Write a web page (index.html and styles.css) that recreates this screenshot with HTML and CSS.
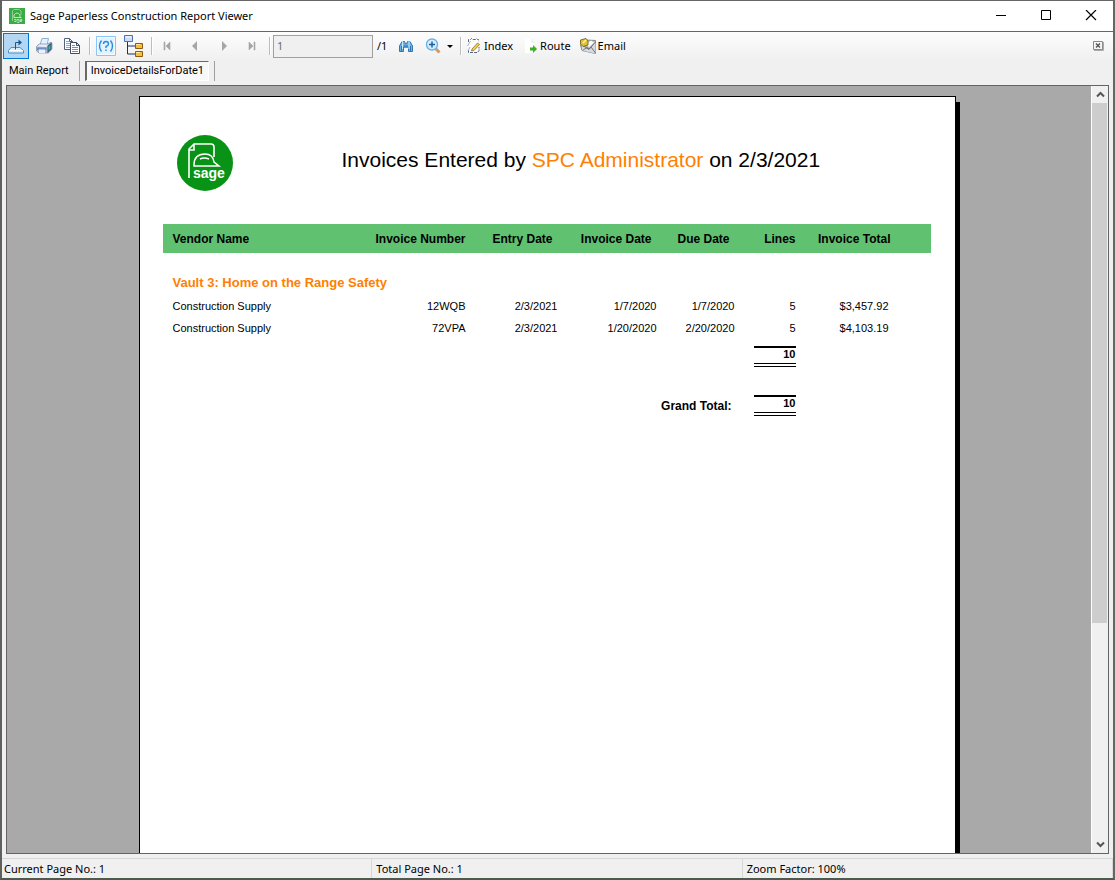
FILE: index.html
```html
<!DOCTYPE html>
<html lang="en">
<head>
<meta charset="utf-8">
<title>Sage Paperless Construction Report Viewer</title>
<link rel="stylesheet" href="styles.css">
</head>
<body>
<div class="window">
  <header class="titlebar">
    <svg class="app-icon" width="16" height="16" viewBox="0 0 16 16"><rect width="16" height="16" fill="#3cab45"/><path d="M3.500 13V3l1.500-1.500h5.500L12 3v4" fill="none" stroke="#8fd093"/><path d="M5 9V7q3-4 6 0v2M4.500 9.500h8" fill="none" stroke="#c0e6c1"/><path d="M5 11.500h2v2H5M8 13.500v-2h2v3H8M11 12.500h2v-1h-2v2h2" fill="none" stroke="#a9dcac"/></svg>
    <h1 class="window-title">Sage Paperless Construction Report Viewer</h1>
    <div class="window-controls">
      <button class="control" aria-label="Minimize"><svg width="12" height="12" viewBox="0 0 12 12"><path d="M1 5.500h10" stroke="#000"/></svg></button>
      <button class="control" aria-label="Maximize"><svg width="12" height="12" viewBox="0 0 12 12"><path d="M1.500 .5h9v9h-9z" fill="none" stroke="#000"/></svg></button>
      <button class="control" aria-label="Close"><svg width="12" height="12" viewBox="0 0 12 12"><path d="M1 0l10 10M11 0L1 10" stroke="#000" stroke-width="1.200"/></svg></button>
    </div>
  </header>

  <div class="toolbar" role="toolbar" aria-label="Report">
    <button class="tool tool-active" aria-label="Export report"><svg width="18" height="18" viewBox="0 0 18 18"><path d="M4 10.500h9l3.500 3v2.500h-15v-2.500z" fill="#d9efff" stroke="#4a90c4"/><path d="M2 13.500h14" stroke="#fff"/><path d="M8.500 12.500v-7h4" fill="none" stroke="#1f5688"/><path d="M11.500 2.500v6l3.500-3z" fill="#1f5688"/></svg></button>
    <button class="tool" aria-label="Print report"><svg width="18" height="18" viewBox="0 0 18 18"><path d="M5 8l2-6.500h6.500L12 8z" fill="#e6f2ff" stroke="#8ab0d8"/><path d="M1.500 9.500L4 7h9l3-2 1 1.500V12l-3.500 4H4l-2.500-2z" fill="#a9b9d4" stroke="#7f8da8" stroke-width=".7"/><path d="M2 9.500L4.500 7.500h8.500l-1.500 2.500z" fill="#e9eef8"/><path d="M2 10.500h9.500V13H2z" fill="#6f8fca"/><path d="M4 12.500h6V16H4z" fill="#eaf2fd"/><path d="M12.500 9l4-3.500V12l-4 4z" fill="#3b5374"/><path d="M13.500 9.500l2-1.500v3.500l-2 2z" fill="#2bbd9d"/></svg></button>
    <button class="tool" aria-label="Copy"><svg width="18" height="18" viewBox="0 0 18 18"><path d="M1.500 1.500h5l3 3v8h-8zM6.500 1.500v3h3" fill="#fff" stroke="#50627c"/><path d="M3 4.500h3M3 6.500h5M3 8.500h5M3 10.500h4" stroke="#73aee0"/><path d="M7.500 5.500h6l3 3v8h-9zM13.500 5.500v3h3" fill="#fff" stroke="#3e4e67"/><path d="M9 8.500h3M9 10.500h6M9 12.500h6M9 14.500h6" stroke="#4a9de0"/></svg></button>
    <span class="divider"></span>
    <button class="tool" aria-label="Toggle parameter panel"><svg width="20" height="20" viewBox="0 0 20 20"><path d="M.5.5h19v19H.5z" fill="#f4faff" stroke="#8cc5f5"/><path d="M2 2h16v16H2z" fill="#e2f2ff"/><path d="M5.500 4.500Q1.500 10 5.500 15.500M14.500 4.500q4 5.500 0 11M7.500 8Q7.500 5.500 10 5.500T12.500 8Q12.500 9.500 10 10.500V12M10 13.500v1.500" fill="none" stroke="#278ce0" stroke-width="1.400"/></svg></button>
    <button class="tool" aria-label="Toggle group tree"><svg width="20" height="22" viewBox="0 0 20 22"><path d="M3.500 6v13H12M3.500 11H12" fill="none" stroke="#172f70"/><path d="M.5.5h8v6h-8z" fill="#c9dcf8" stroke="#536fac"/><path d="M1.500 2h6" stroke="#fff"/><path d="M11.500 8.500h7v5h-7zM11.500 16.500h7v5h-7z" fill="#f8be38" stroke="#8c5b15"/><path d="M12 9.500h4M12 17.500h4" stroke="#ffe8a3"/></svg></button>
    <span class="divider"></span>
    <button class="tool" aria-label="First page" disabled><svg width="10" height="10" viewBox="0 0 10 10"><path d="M1 1h1v8H1zM7 1v8L3 5z" fill="#a6a6a6" stroke="#a6a6a6" stroke-width=".6"/></svg></button>
    <button class="tool" aria-label="Previous page" disabled><svg width="10" height="10" viewBox="0 0 10 10"><path d="M6 0v10L1 5z" fill="#a6a6a6"/></svg></button>
    <button class="tool" aria-label="Next page" disabled><svg width="10" height="10" viewBox="0 0 10 10"><path d="M3 0v10l5-5z" fill="#a6a6a6"/></svg></button>
    <button class="tool" aria-label="Last page" disabled><svg width="10" height="10" viewBox="0 0 10 10"><path d="M2 1v8l4-4zM7 1h1v8H7z" fill="#a6a6a6" stroke="#a6a6a6" stroke-width=".6"/></svg></button>
    <span class="divider"></span>
    <input class="page-input" id="page-number" type="text" value="1" aria-label="Page number" disabled>
    <label class="page-count" for="page-number">/1</label>
    <button class="tool" aria-label="Find text"><svg width="16" height="16" viewBox="0 0 16 16"><path d="M1.500 13.500V8L4 3.500h2.500L7.500 6h1l1-2.500H12L14.500 8v5.500h-4V9h-5v4.500z" fill="#6fb2e2" stroke="#2d78b5"/><path d="M4.500 3v8M11 3v8" stroke="#c4e6fb"/><path d="M3.500 8v5M12.500 8v5M7 7v3M9 7v3" stroke="#2d78b5"/></svg></button>
    <button class="tool tool-menu" aria-label="Zoom"><svg width="18" height="18" viewBox="0 0 18 18"><path d="M10.500 11.500l4 4" stroke="#d69a5e" stroke-width="3"/><circle cx="7" cy="7.500" r="5.500" fill="#d3edff" stroke="#6ab4ea" stroke-width="1.400"/><path d="M4 7.500h6M7 4.500v6" stroke="#1b619f" stroke-width="1.500"/></svg><svg width="6" height="3" viewBox="0 0 6 3"><path d="M0 0h6L3 3z" fill="#000"/></svg></button>
    <span class="divider"></span>
    <button class="tool tool-text"><svg width="16" height="18" viewBox="0 0 16 18"><path d="M3.500 2.500h9v12q-1 1.500-3 1.500H2.500v-9z" fill="#fff"/><path d="M2.500 5V2.500h2l1-1 1 1h3l1-1 1 1h1v2M2.500 13v2.500h9l1.500-2V10" fill="none" stroke="#526680" stroke-dasharray="3 1"/><path d="M1.500 9L4.500 4M2 14l2-4" stroke="#9db3ca"/><path d="M6 12l5.500-6 2 1.500L8 13.500l-2.500.5z" fill="#f5cf42" stroke="#776334" stroke-width=".7"/></svg>Index</button>
    <button class="tool tool-text"><svg width="16" height="18" viewBox="0 0 16 18"><path d="M3 2h7l3 3v11H3z" fill="#fff"/><path d="M10 2v3h3" fill="none" stroke="#e2e7ec"/><path d="M8 10.500h3V8l4 4-4 4v-2.500H8z" fill="#3eae24"/></svg>Route</button>
    <button class="tool tool-text"><svg width="16" height="18" viewBox="0 0 16 18"><path d="M.5 8l5-5 10 .5v13L2 13.500z" fill="#b9bcc0" stroke="#85898d"/><path d="M2 8l7 4.500L15.500 5v11.500L2 13.500z" fill="#d9dcdf"/><path d="M2.500 13.500L7 10.500l2 1.500 2-2 4.500 6M2 8l7 4.500L15.500 5" fill="none" stroke="#6e7479"/><path d="M6 7l5-3.500 3 2-5 4.500z" fill="#fff"/><path d="M.5 3L6 1.500 8 4v4L3 9.500.5 7z" fill="#dfc337" stroke="#80701f"/><path d="M3 6l3-3" stroke="#fff6aa" stroke-width="1.500"/></svg>Email</button>
    <button class="close-view" aria-label="Close current view"><svg width="11" height="10" viewBox="0 0 11 10"><path d="M.5.5h9v8h-9z" fill="#f5f5f5" stroke="#8a8a8a"/><path d="M1 9.500h9.500V1" fill="none" stroke="#aaa"/><path d="M3 2.500l4 4M7 2.500l-4 4" stroke="#555" stroke-width="1.400"/></svg></button>
  </div>

  <nav class="tabs" aria-label="Report views">
    <button class="tab">Main Report</button>
    <span class="tab-divider"></span>
    <button class="tab tab-selected">InvoiceDetailsForDate1</button>
    <span class="tab-divider"></span>
  </nav>

  <main class="viewer">
    <div class="canvas">
      <article class="paper">
        <div class="report-heading">
          <svg width="58" height="58" viewBox="0 0 58 58" role="img" aria-label="Sage"><circle cx="29" cy="29" r="28" fill="#099316"/><path d="M13 44V15l5-5h17q3 0 3 3v10M13 16h5v-6" fill="none" stroke="#fff" stroke-width="1.600"/><path d="M18 31q0-11 11-11 8 0 9 8l5 4H18zM24 25q4-2 9 0" fill="none" stroke="#fff" stroke-width="1.500"/><text class="logo-word" x="17" y="44">sage</text></svg>
          <h2 class="report-title">Invoices Entered by <span class="accent">SPC Administrator</span> on 2/3/2021</h2>
        </div>
        <table class="report">
          <colgroup><col class="c-vendor"><col class="c-number"><col class="c-entry"><col class="c-invoice"><col class="c-due"><col class="c-lines"><col class="c-total"><col></colgroup>
          <thead>
            <tr><th class="vendor" scope="col">Vendor Name</th><th scope="col">Invoice Number</th><th class="date" scope="col">Entry Date</th><th class="date" scope="col">Invoice Date</th><th class="date" scope="col">Due Date</th><th scope="col">Lines</th><th scope="col">Invoice Total</th><td></td></tr>
          </thead>
          <tbody>
            <tr class="group"><th class="vendor" colspan="8" scope="rowgroup">Vault 3: Home on the Range Safety</th></tr>
            <tr><td class="vendor">Construction Supply</td><td>12WQB</td><td>2/3/2021</td><td>1/7/2020</td><td>1/7/2020</td><td>5</td><td class="money">$3,457.92</td><td></td></tr>
            <tr><td class="vendor">Construction Supply</td><td>72VPA</td><td>2/3/2021</td><td>1/20/2020</td><td>2/20/2020</td><td>5</td><td class="money">$4,103.19</td><td></td></tr>
            <tr class="subtotal"><td colspan="5"></td><td><span class="sum">10</span></td><td colspan="2"></td></tr>
          </tbody>
          <tfoot>
            <tr class="grand"><th class="grand-label" colspan="5" scope="row">Grand Total:</th><td><span class="sum">10</span></td><td colspan="2"></td></tr>
          </tfoot>
        </table>
      </article>
    </div>
    <div class="scrollbar">
      <button class="scroll-arrow" aria-label="Scroll up"><svg width="9" height="7" viewBox="0 0 9 7"><path d="M1 5.500L4.500 2 8 5.500" fill="none" stroke="#555" stroke-width="2"/></svg></button>
      <div class="track"><div class="thumb"></div></div>
      <button class="scroll-arrow" aria-label="Scroll down"><svg width="9" height="7" viewBox="0 0 9 7"><path d="M1 1.500L4.500 5 8 1.500" fill="none" stroke="#555" stroke-width="2"/></svg></button>
    </div>
  </main>

  <footer class="status">
    <span class="status-cell">Current Page No.: 1</span>
    <span class="status-cell">Total Page No.: 1</span>
    <span class="status-cell">Zoom Factor: 100%</span>
  </footer>
</div>
</body>
</html>
```
FILE: styles.css
```css
* { box-sizing: border-box; }
body { margin: 0; background: #3c4a42; }
button { font: inherit; color: inherit; border: 0; padding: 0; background: none; display: flex; align-items: center; justify-content: center; }
svg { display: block; flex: none; }

.window {
  height: 100vh;
  display: flex;
  flex-direction: column;
  border: 1px solid #666;
  border-width: 1px 2px;
  border-left-color: #5d625f;
  border-bottom: 2px solid #4c5a50;
  background: #f0f0f0;
  font: 12px/16px "Noto Sans", "Open Sans", sans-serif;
  color: #000;
}

.titlebar { display: flex; align-items: center; flex: none; height: 31px; padding-left: 7px; background: #fff; border-bottom: 1px solid #666; }
.app-icon { margin-right: 5px; }
.window-title { margin: 0; font-size: 11px; font-weight: 400; flex: 1; }
.window-controls { display: flex; }
.control { width: 45px; height: 30px; }

.toolbar { display: flex; align-items: center; flex: none; gap: 2px; height: 28px; padding: 0 9px 0 1px; background: linear-gradient(#fdfdfd, #f0f0f0); font-size: 11px; }
.tool { width: 26px; height: 26px; flex: none; }
.tool-active { background: #b3d7f3; border: 1px solid #0078d7; }
.divider { width: 4px; height: 18px; flex: none; border-left: 2px solid transparent; background: linear-gradient(90deg, #bdbdbd 1px, #fff 1px, #fff 2px) padding-box; }
.page-input { width: 100px; height: 23px; border: 1px solid #a0a0a0; background: #f0f0f0; color: #6d6d6d; font: inherit; padding: 0 3px 2px; }
.page-count { width: 16px; padding-left: 2px; }
.tool-menu { width: 35px; gap: 4px; }
.tool-text { width: auto; gap: 2px; padding: 0 5px 0 2px; }
.close-view { margin-left: auto; }

.tabs { display: flex; align-items: center; flex: none; height: 25px; padding: 0 0 4px; font-family: Roboto, sans-serif; font-size: 11px; }
.tab { height: 20px; padding: 0 10px 0 7px; }
.tab-divider { width: 1px; height: 20px; margin-right: 5px; background: #a0a0a0; }
.tab-selected { margin-right: 5px; padding: 0 4px; border: 1px solid #fff; border-top-color: #696969; border-left: 2px solid #696969; background: #f8f8f8; }

.viewer { display: flex; flex: 1; min-height: 0; margin: 0 4px 4px; border: 1px solid #646464; background: #a9a9a9; }
.canvas { flex: 1; min-width: 0; overflow: hidden; display: flex; justify-content: center; align-items: flex-start; padding: 10px 4px 0 0; }
.paper { width: 817px; min-height: 1056px; flex: none; padding: 37px 24px 0 23px; border: 1px solid #000; background: #fff; box-shadow: 4px 6px 0 #000; font-family: "Liberation Sans", Arial, sans-serif; }
.report-heading { display: flex; padding-left: 13px; height: 90px; }
.report-title { flex: 1; margin: 14px 0 0 108px; font-size: 21px; line-height: 24px; font-weight: 400; white-space: nowrap; }
.accent { color: #ff8000; }
.logo-word { font: 700 14px "Liberation Sans", Arial, sans-serif; fill: #fff; }

.report { width: 100%; table-layout: fixed; border-collapse: collapse; font-size: 11px; line-height: 14px; text-align: right; }
.c-vendor { width: 160px; }
.c-number { width: 143px; }
.c-entry { width: 92px; }
.c-invoice { width: 99px; }
.c-due { width: 78px; }
.c-lines { width: 61px; }
.c-total { width: 95px; }
.report th, .report td { padding: 0; height: 22px; }
.report thead th, .report thead td { height: 29px; background: #60c171; font-size: 12px; }
.report .vendor { text-align: left; padding-left: 10px; }
.report .date { padding-right: 5px; }
.report .money { padding-right: 2px; }
.report .group th { height: 42px; padding-top: 18px; font-size: 13px; color: #ff8000; }
.sum { display: block; width: 42px; margin-left: auto; height: 21px; border-top: 2px solid #000; border-bottom: 4px double #000; font-weight: 700; line-height: 12px; }
.report .subtotal td { height: 35px; vertical-align: top; padding-top: 7px; }
.report .grand td, .report .grand th { height: 42px; vertical-align: top; padding-top: 21px; }
.report .grand .grand-label { padding: 25px 3px 0 0; font-size: 12px; }

.scrollbar { display: flex; flex-direction: column; width: 17px; border-left: 1px solid #fff; background: #f0f0f0; }
.scroll-arrow { width: 16px; height: 17px; }
.track { flex: 1; }
.thumb { height: 71%; width: 15px; background: #cdcdcd; }

.status { display: grid; flex: none; grid-template-columns: repeat(3, 1fr); height: 20px; border-top: 1px solid #d7d7d7; font-size: 11px; line-height: 19px; }
.status-cell { padding-left: 2px; border-right: 1px solid #d7d7d7; }
.status-cell + .status-cell { padding-left: 4px; }
```
